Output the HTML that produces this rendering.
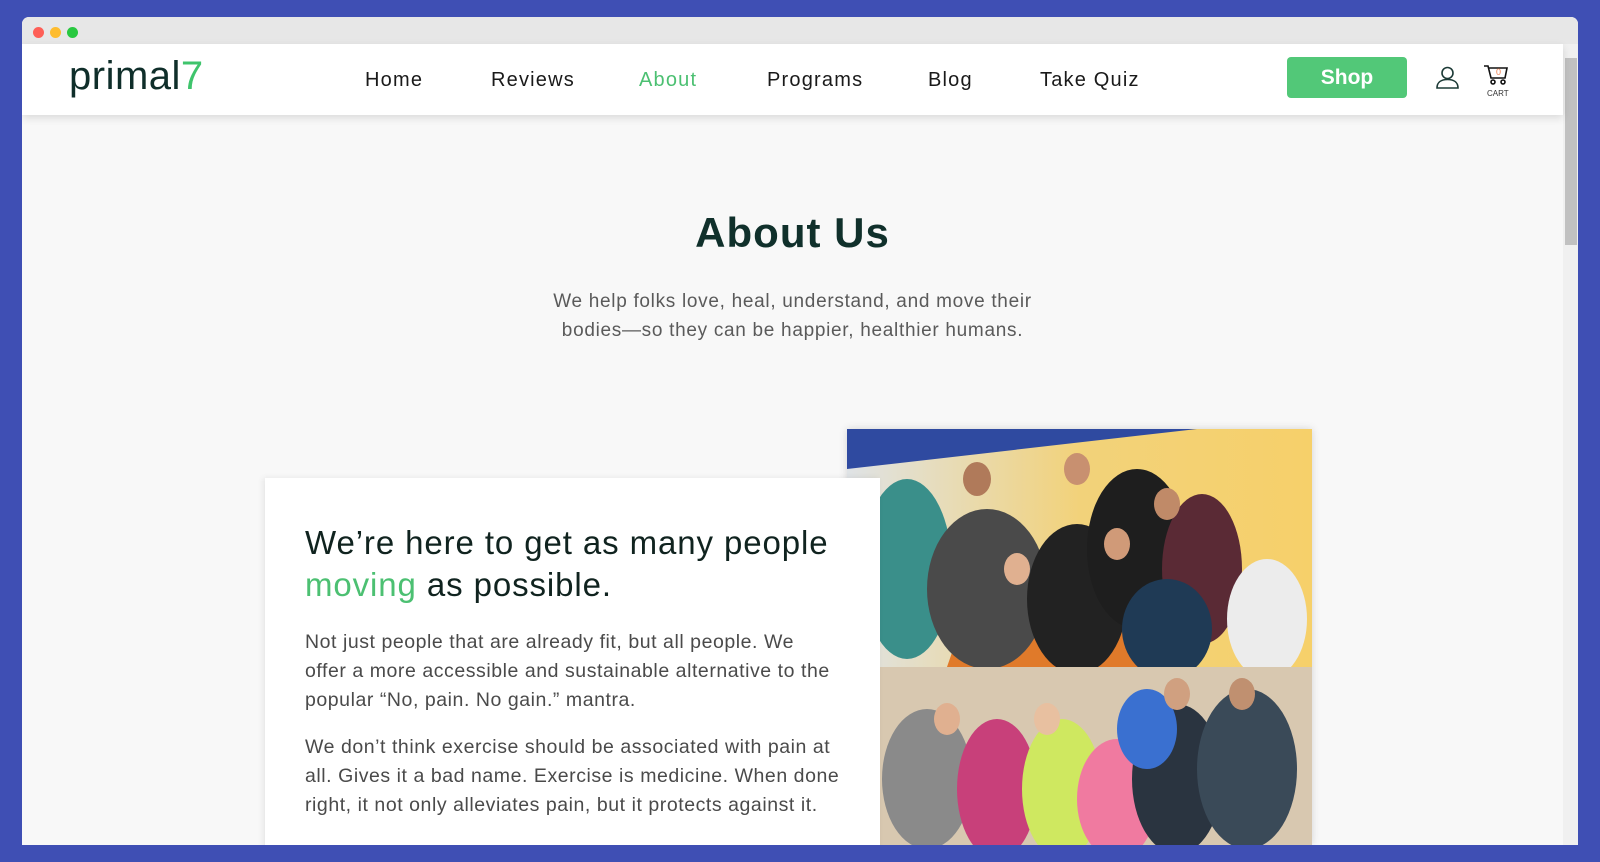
<!DOCTYPE html>
<html><head><meta charset="utf-8"><style>
*{margin:0;padding:0;box-sizing:border-box}
body{width:1600px;height:862px;background:#3f4fb4;position:relative;overflow:hidden;font-family:"Liberation Sans",sans-serif}
.win{position:absolute;left:22px;top:17px;width:1556px;height:828px;background:#f8f8f8;border-radius:7px 7px 0 0;overflow:hidden}
.bar{position:absolute;left:0;top:0;width:100%;height:27px;background:#e7e7e7}
.dot{position:absolute;top:10px;width:11px;height:11px;border-radius:50%}
.hdr{position:absolute;left:0;top:27px;width:1541px;height:71px;background:#fff;box-shadow:0 3px 8px rgba(0,0,0,.12);z-index:2}
.logo{position:absolute;left:47px;top:10px;font-size:40px;color:#0f2e2a;letter-spacing:0.5px;font-weight:500}
.nav{position:absolute;top:25px;font-size:20px;color:#1a1a1a;letter-spacing:1.2px}
.shop{position:absolute;left:1265px;top:13px;width:120px;height:41px;background:#52c878;border-radius:4px;color:#fff;font-weight:bold;font-size:21px;text-align:center;line-height:41px}
.sb{position:absolute;left:1541px;top:27px;width:15px;height:801px;background:#f0f0f0}
.thumb{position:absolute;left:2px;top:14px;width:12px;height:187px;background:#c1c1c1}
h1{position:absolute;left:0;width:1541px;top:192px;text-align:center;font-size:42px;color:#10302b;letter-spacing:1px}
.sub{position:absolute;left:0;width:1541px;top:270px;text-align:center;font-size:19px;line-height:29px;color:#5a5a5a;letter-spacing:.7px}
.card{position:absolute;left:243px;top:461px;width:615px;height:400px;background:#fff;box-shadow:-2px 0 6px rgba(0,0,0,.08);z-index:1}
.card h2{position:absolute;left:40px;top:44px;font-size:33px;font-weight:normal;line-height:42px;color:#10231f;letter-spacing:.9px;white-space:nowrap}
.card p{position:absolute;left:40px;font-size:19.5px;line-height:29px;color:#4a4a4a;width:560px;letter-spacing:.55px;white-space:nowrap}
.photo{position:absolute;left:825px;top:412px;width:465px;height:416px;box-shadow:0 0 8px rgba(0,0,0,.15)}
</style></head><body>
<div class="win">
<div class="bar"><div class="dot" style="left:11px;background:#fe5f57"></div><div class="dot" style="left:28px;background:#febc2e"></div><div class="dot" style="left:45px;background:#28c840"></div></div>
<div class="hdr">
<div class="logo">primal<span style="color:#3fc46c">7</span></div>
<div class="nav" style="left:343px">Home</div>
<div class="nav" style="left:469px">Reviews</div>
<div class="nav" style="left:617px;color:#4cc072">About</div>
<div class="nav" style="left:745px">Programs</div>
<div class="nav" style="left:906px">Blog</div>
<div class="nav" style="left:1018px">Take Quiz</div>
<div class="shop">Shop</div>
<svg style="position:absolute;left:1413px;top:21px" width="25" height="25" viewBox="0 0 25 25" fill="none" stroke="#1c3a36" stroke-width="1.6"><circle cx="12.5" cy="8" r="5.5"/><path d="M2 23c0-6 4.5-8.5 10.5-8.5S23 17 23 23z"/></svg>
<svg style="position:absolute;left:1461px;top:20px" width="28" height="22" viewBox="0 0 28 22" fill="none" stroke="#111" stroke-width="1.6"><path d="M1 2h4l3 12h14l2-10H6"/><circle cx="10" cy="18" r="2"/><circle cx="20" cy="18" r="2"/><text x="13" y="11" font-size="9" fill="#f08050" stroke="none" font-family="Liberation Sans">0</text></svg>
<div style="position:absolute;left:1465px;top:45px;font-size:8px;color:#333">CART</div>
</div>
<div class="sb"><div class="thumb"></div></div>
<h1>About Us</h1>
<div class="sub">We help folks love, heal, understand, and move their<br>bodies—so they can be happier, healthier humans.</div>
<div class="photo">
<svg width="465" height="416" viewBox="0 0 465 416">
<defs><linearGradient id="g1" x1="0" y1="0" x2="1" y2="0"><stop offset="0" stop-color="#dfe3e6"/><stop offset=".5" stop-color="#f2d27a"/><stop offset="1" stop-color="#f6d06a"/></linearGradient></defs>
<rect width="465" height="238" fill="url(#g1)"/>
<polygon points="0,0 350,0 0,40" fill="#2f4aa0"/>
<polygon points="120,180 260,130 300,238 100,238" fill="#e07a2a"/>
<ellipse cx="60" cy="140" rx="45" ry="90" fill="#3a8f8a"/>
<ellipse cx="140" cy="160" rx="60" ry="80" fill="#4a4a4a"/>
<ellipse cx="230" cy="170" rx="50" ry="75" fill="#222"/>
<ellipse cx="290" cy="120" rx="50" ry="80" fill="#1e1e1e"/>
<ellipse cx="355" cy="140" rx="40" ry="75" fill="#5a2a35"/>
<ellipse cx="320" cy="200" rx="45" ry="50" fill="#1f3a55"/>
<ellipse cx="420" cy="190" rx="40" ry="60" fill="#ececec"/>
<ellipse cx="130" cy="50" rx="14" ry="17" fill="#b07a5a"/><ellipse cx="230" cy="40" rx="13" ry="16" fill="#c89070"/><ellipse cx="320" cy="75" rx="13" ry="16" fill="#c08a68"/><ellipse cx="270" cy="115" rx="13" ry="16" fill="#d09a78"/><ellipse cx="170" cy="140" rx="13" ry="16" fill="#e0b090"/>
<rect x="32" y="238" width="433" height="178" fill="#d8c8b0"/>
<rect x="0" y="238" width="32" height="178" fill="#fff"/>
<ellipse cx="80" cy="350" rx="45" ry="70" fill="#8a8a8a"/>
<ellipse cx="150" cy="360" rx="40" ry="70" fill="#c8407a"/>
<ellipse cx="215" cy="360" rx="40" ry="70" fill="#cfe860"/>
<ellipse cx="270" cy="370" rx="40" ry="60" fill="#f07aa0"/>
<ellipse cx="330" cy="350" rx="45" ry="75" fill="#2a3440"/>
<ellipse cx="400" cy="340" rx="50" ry="80" fill="#3a4a58"/>
<ellipse cx="300" cy="300" rx="30" ry="40" fill="#3a70d0"/>
<ellipse cx="100" cy="290" rx="13" ry="16" fill="#e0b090"/><ellipse cx="200" cy="290" rx="13" ry="16" fill="#e8c0a0"/><ellipse cx="330" cy="265" rx="13" ry="16" fill="#d0a080"/><ellipse cx="395" cy="265" rx="13" ry="16" fill="#c09070"/>
</svg>
</div>
<div class="card">
<h2>We’re here to get as many people<br><span style="color:#4cc072">moving</span> as possible.</h2>
<p style="top:150px">Not just people that are already fit, but all people. We<br>offer a more accessible and sustainable alternative to the<br>popular “No, pain. No gain.” mantra.</p>
<p style="top:255px">We don’t think exercise should be associated with pain at<br>all. Gives it a bad name. Exercise is medicine. When done<br>right, it not only alleviates pain, but it protects against it.</p>
</div>
</div>
</body></html>
